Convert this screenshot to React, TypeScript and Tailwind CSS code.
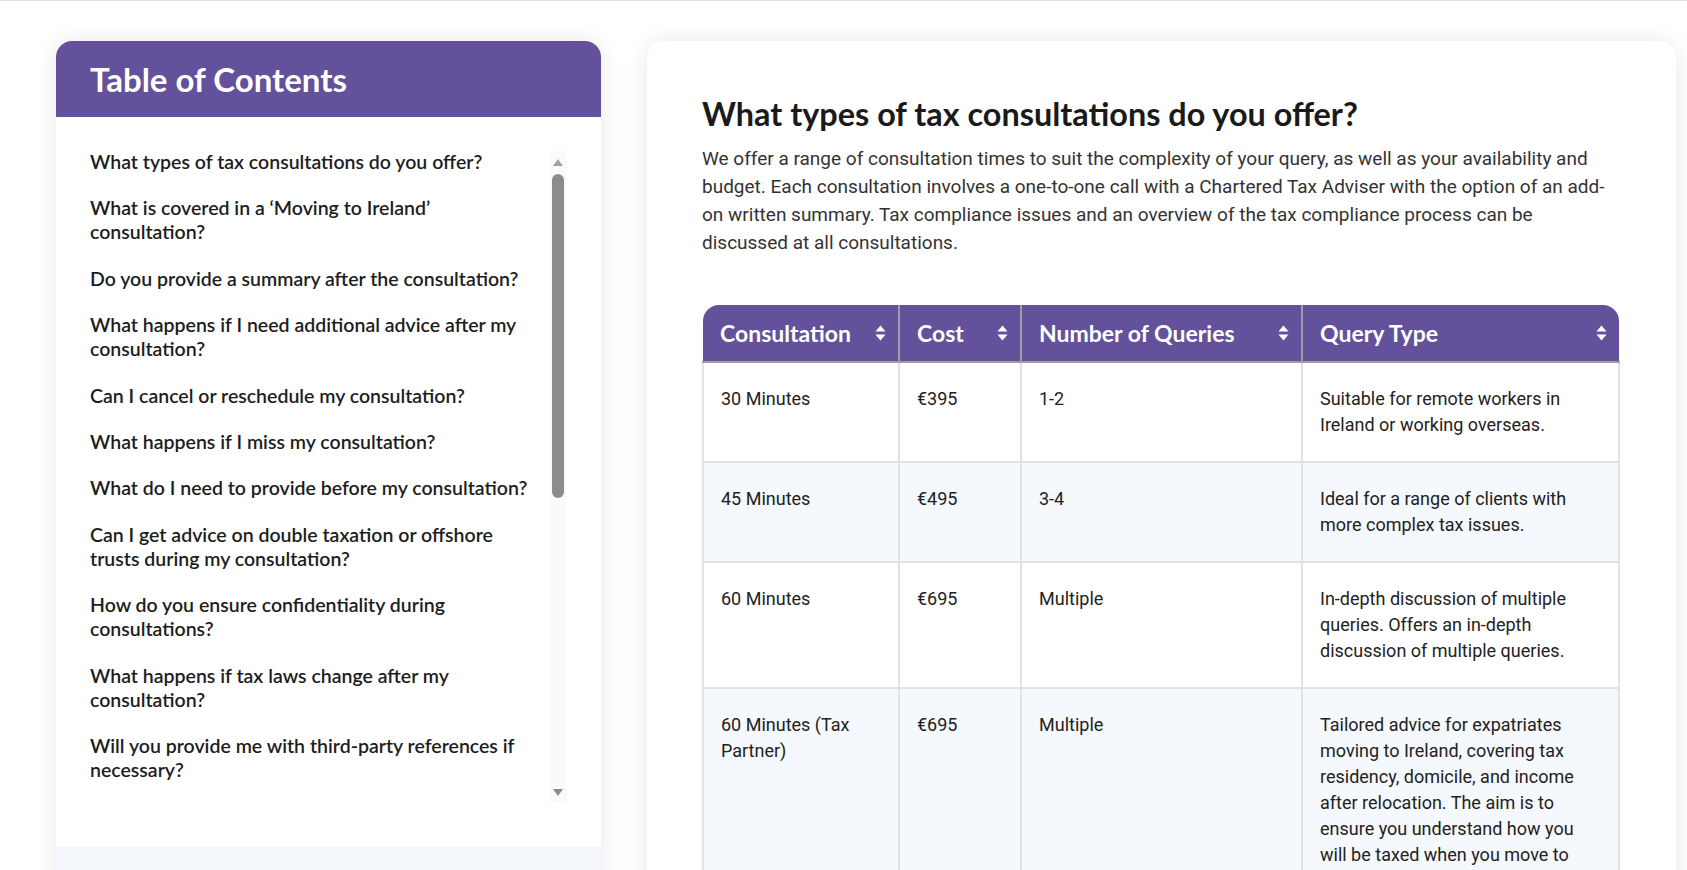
import React from "react";

const tocItems: string[][] = [
  ["What types of tax consultations do you offer?"],
  ["What is covered in a \u2018Moving to Ireland\u2019", "consultation?"],
  ["Do you provide a summary after the consultation?"],
  ["What happens if I need additional advice after my", "consultation?"],
  ["Can I cancel or reschedule my consultation?"],
  ["What happens if I miss my consultation?"],
  ["What do I need to provide before my consultation?"],
  ["Can I get advice on double taxation or offshore", "trusts during my consultation?"],
  ["How do you ensure confidentiality during", "consultations?"],
  ["What happens if tax laws change after my", "consultation?"],
  ["Will you provide me with third-party references if", "necessary?"],
];

const rows = [
  {
    time: "30 Minutes",
    cost: "\u20ac395",
    queries: "1-2",
    type: "Suitable for remote workers in Ireland or working overseas.",
  },
  {
    time: "45 Minutes",
    cost: "\u20ac495",
    queries: "3-4",
    type: "Ideal for a range of clients with more complex tax issues.",
  },
  {
    time: "60 Minutes",
    cost: "\u20ac695",
    queries: "Multiple",
    type: "In-depth discussion of multiple queries. Offers an in-depth discussion of multiple queries.",
  },
  {
    time: "60 Minutes (Tax Partner)",
    cost: "\u20ac695",
    queries: "Multiple",
    type: "Tailored advice for expatriates moving to Ireland, covering tax residency, domicile, and income after relocation. The aim is to ensure you understand how you will be taxed when you move to Ireland.",
  },
];

const SortIcon = () => (
  <svg width="11" height="16" viewBox="0 0 11 16" className="shrink-0">
    <path d="M5.5 0.5 L10.5 6.5 H0.5 Z" fill="#fff" />
    <path d="M5.5 15.5 L10.5 9.5 H0.5 Z" fill="#fff" />
  </svg>
);

const Scrollbar = () => (
  <div className="flex h-full w-[18px] shrink-0 flex-col bg-[#fafafa]">
    <div className="flex h-[22px] items-center justify-center">
      <svg width="10" height="7" viewBox="0 0 10 7">
        <path d="M5 0 L10 7 H0 Z" fill="#a3a3a3" />
      </svg>
    </div>
    <div className="mx-auto mt-[1px] h-[324px] w-[12px] rounded-full bg-[#8c8c8c]" />
    <div className="flex-1" />
    <div className="flex h-[20px] items-center justify-center">
      <svg width="10" height="7" viewBox="0 0 10 7">
        <path d="M0 0 H10 L5 7 Z" fill="#8c8c8c" />
      </svg>
    </div>
  </div>
);

const App = () => {
  const heads = ["Consultation", "Cost", "Number of Queries", "Query Type"];

  return (
    <div className="min-h-screen overflow-hidden border-t border-[#dedede] bg-white">
      <div className="flex h-[869px] items-start gap-[46px] overflow-hidden pl-[56px] pr-[11px] pt-[40px]">
        {/* Table of contents */}
        <aside className="w-[545px] shrink-0 overflow-hidden rounded-t-2xl bg-white shadow-[0_0_24px_rgba(0,0,0,0.09)] font-['Lato',sans-serif]">
          <div className="flex h-[76px] items-center bg-[#63519b] px-[34px]">
            <h2 className="text-[33px] font-bold leading-none text-white">Table of Contents</h2>
          </div>
          <div className="flex h-[730px] px-[34px] pb-[45px] pt-[34px]">
            <ul className="-mt-[1px] flex flex-1 flex-col gap-[22.4px] overflow-hidden">
              {tocItems.map((lines, i) => (
                <li key={i} className="text-[19.5px] font-semibold leading-[24px] text-[#1d1d1d]">
                  {lines.map((l, j) => (
                    <span key={j} className="block whitespace-nowrap">
                      {l}
                    </span>
                  ))}
                </li>
              ))}
            </ul>
            <Scrollbar />
          </div>
          <div className="h-[80px] bg-[#f5f8fd]" />
        </aside>

        {/* FAQ content */}
        <main className="h-[900px] flex-1 rounded-2xl bg-white px-[55px] pt-[54px] shadow-[0_0_24px_rgba(0,0,0,0.09)]">
          <h1 className="font-['Lato',sans-serif] text-[32.4px] font-bold leading-[38px] text-[#1a1a1a]">
            What types of tax consultations do you offer?
          </h1>
          <p className="mt-[12px] max-w-[916px] font-['Roboto',sans-serif] text-[19px] leading-[28px] text-[#333]">
            We offer a range of consultation times to suit the complexity of your query, as well as your availability
            and budget. Each consultation involves a one-to-one call with a Chartered Tax Adviser with the option of an
            add-on written summary. Tax compliance issues and an overview of the tax compliance process can be discussed
            at all consultations.
          </p>

          <table className="mt-[48px] w-[916px] table-fixed border-collapse">
            <colgroup>
              <col className="w-[196px]" />
              <col className="w-[122px]" />
              <col className="w-[281px]" />
              <col className="w-[317px]" />
            </colgroup>
            <thead>
              <tr className="h-[57px] bg-[#63519b]">
                {heads.map((h, i) => (
                  <th
                    key={h}
                    className={`border-b-2 border-[#a19cab] p-0 text-left font-['Lato',sans-serif] text-[23px] font-bold text-white ${
                      i > 0 ? "border-l-2" : ""
                    } ${i === 0 ? "rounded-tl-2xl" : ""} ${i === 3 ? "rounded-tr-2xl" : ""}`}
                  >
                    <div className="flex items-center justify-between pl-[17px] pr-[12px]">
                      <span>{h}</span>
                      <SortIcon />
                    </div>
                  </th>
                ))}
              </tr>
            </thead>
            <tbody className="font-['Roboto',sans-serif] text-[18px] leading-[26px] text-[#222]">
              {rows.map((r, i) => (
                <tr key={i} className={i % 2 === 1 ? "bg-[#f5f8fc]" : "bg-white"}>
                  {[r.time, r.cost, r.queries, r.type].map((c, j) => (
                    <td
                      key={j}
                      className="border-2 border-[#e2e2e2] px-[17px] pb-[23px] pt-[23px] align-top"
                    >
                      {c}
                    </td>
                  ))}
                </tr>
              ))}
            </tbody>
          </table>
        </main>
      </div>
    </div>
  );
};

export default App;
